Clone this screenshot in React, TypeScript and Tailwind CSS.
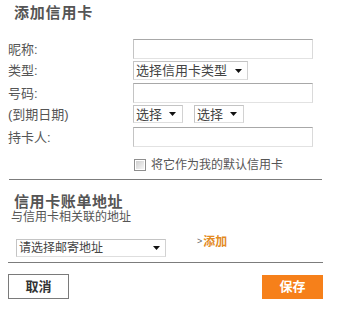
import React from "react";

function Arrow() {
  return (
    <svg width="7" height="4" viewBox="0 0 7 4" className="shrink-0">
      <polygon points="0,0 7,0 3.5,4" fill="#111" />
    </svg>
  );
}

function Input({ w = "w-[180px]", h = "h-[20px]" }: { w?: string; h?: string }) {
  return (
    <div
      className={`${w} ${h} border border-t-[#a8a8a8] border-l-[#c4c4c4] border-r-[#dadada] border-b-[#e2e2e2] bg-white`}
    />
  );
}

function Select({
  text,
  w,
  h = "h-[19px]",
  size = "text-[13px]",
  pr = "pr-[5px]",
}: {
  text: string;
  w: string;
  h?: string;
  size?: string;
  pr?: string;
}) {
  return (
    <div
      className={`${w} ${h} ${size} ${pr} flex items-center justify-between pl-[2px] border border-[#c4c4c4] border-b-[#dedede] border-r-[#d2d2d2] bg-white text-[#444] leading-none`}
    >
      <span>{text}</span>
      <Arrow />
    </div>
  );
}

function Label({ children }: { children: React.ReactNode }) {
  return (
    <div className="w-[133px] pl-[8px] text-[13px] leading-none text-[#555] shrink-0">
      {children}
    </div>
  );
}

export default function App() {
  return (
    <div className="w-[338px] h-[317px] bg-white overflow-hidden font-['Liberation_Sans','Noto_Sans_CJK_SC',sans-serif] text-[#555]">
      <div className="pl-[14px] pt-[3px] h-[23px] leading-[20px] text-[15px] font-bold text-[#555] tracking-[0.8px]">
        添加信用卡
      </div>

      <div className="mt-[16px] flex flex-col">
        <div className="flex items-center h-[20px]">
          <Label>昵称:</Label>
          <Input />
        </div>
        <div className="flex items-center h-[19px] mt-[2px]">
          <Label>类型:</Label>
          <Select text="选择信用卡类型" w="w-[115px]" />
        </div>
        <div className="flex items-center h-[20px] mt-[3px]">
          <Label>号码:</Label>
          <Input />
        </div>
        <div className="flex items-center h-[18px] mt-[2px]">
          <Label>(到期日期)</Label>
          <Select text="选择" w="w-[50px]" h="h-[18px]" pr="pr-[6px]" />
          <div className="ml-[11px]">
            <Select text="选择" w="w-[50px]" h="h-[18px]" pr="pr-[6px]" />
          </div>
        </div>
        <div className="flex items-center h-[20px] mt-[4px]">
          <Label>持卡人:</Label>
          <Input />
        </div>
        <div className="flex items-center h-[12px] mt-[12px]">
          <div className="w-[134px] shrink-0" />
          <div className="w-[12px] h-[12px] border border-[#8e8e8e] p-px bg-white">
            <div className="w-full h-full bg-linear-to-br from-[#cfcfcf] to-[#f6f6f6]" />
          </div>
          <span className="ml-[5px] text-[12px] leading-none text-[#555]">
            将它作为我的默认信用卡
          </span>
        </div>
      </div>

      <div className="mt-[8px] ml-[9px] w-[313px] h-px bg-[#7c7c7c]" />

      <div className="mt-[14px] pl-[14px] h-[16px] leading-[16px] text-[15px] font-bold text-[#555] tracking-[0.6px]">
        信用卡账单地址
      </div>
      <div className="pl-[11px] h-[14px] leading-[14px] text-[12px] text-[#555]">
        与信用卡相关联的地址
      </div>

      <div className="mt-[15px] flex items-start">
        <div className="ml-[16px]">
          <Select text="请选择邮寄地址" w="w-[150px]" h="h-[18px]" size="text-[12px]" pr="pr-[5px]" />
        </div>
        <div className="ml-[31px] -mt-[3px] flex items-start leading-none">
          <span className="text-[9px] text-[#666] mt-[1px] mr-[1px]">&gt;</span>
          <span className="text-[12px] font-bold text-[#e38b1f]">添加</span>
        </div>
      </div>

      <div className="mt-[5px] ml-[8px] w-[315px] h-px bg-[#7c7c7c]" />

      <div className="mt-[11px] flex items-start">
        <div className="ml-[8px] w-[61px] h-[25px] border border-[#7a7a7a] flex items-center justify-center text-[13px] font-bold text-[#333]">
          取消
        </div>
        <div className="ml-[193px] mt-px w-[61px] h-[24px] bg-[#f6801a] flex items-center justify-center text-[13px] font-bold text-white">
          保存
        </div>
      </div>
    </div>
  );
}
